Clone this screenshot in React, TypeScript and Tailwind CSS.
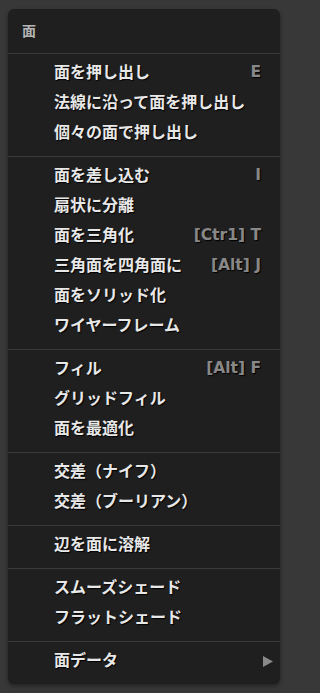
const sections: { label: string; hint?: string; sub?: boolean }[][] = [
  [
    { label: '面を押し出し', hint: 'E' },
    { label: '法線に沿って面を押し出し' },
    { label: '個々の面で押し出し' },
  ],
  [
    { label: '面を差し込む', hint: 'I' },
    { label: '扇状に分離' },
    { label: '面を三角化', hint: '[Ctr1] T' },
    { label: '三角面を四角面に', hint: '[Alt] J' },
    { label: '面をソリッド化' },
    { label: 'ワイヤーフレーム' },
  ],
  [
    { label: 'フィル', hint: '[Alt] F' },
    { label: 'グリッドフィル' },
    { label: '面を最適化' },
  ],
  [{ label: '交差（ナイフ）' }, { label: '交差（ブーリアン）' }],
  [{ label: '辺を面に溶解' }],
  [{ label: 'スムーズシェード' }, { label: 'フラットシェード' }],
  [{ label: '面データ', sub: true }],
];

function MenuRow({ label, hint, sub }: { label: string; hint?: string; sub?: boolean }) {
  return (
    <div className="flex h-[30px] items-center justify-between pl-[46px] pr-[19px]">
      <span className="text-[16px] font-bold text-[#e8e8e8] [text-shadow:1px_1px_1px_#000]">{label}</span>
      {hint && (
        <span className="text-[15.5px] font-bold text-[#888888] [text-shadow:1px_1px_1px_#000]">{hint}</span>
      )}
      {sub && (
        <svg width="10" height="11" viewBox="0 0 10 11" className="mr-[-12px]">
          <path d="M0 0 L10 5.5 L0 11 Z" fill="#8a8a8a" />
        </svg>
      )}
    </div>
  );
}

export default function App() {
  return (
    <div
      className="min-h-[693px] w-full bg-[#383838]"
      style={{ fontFamily: '"DejaVu Sans", "Noto Sans CJK JP", sans-serif' }}
    >
      <div className="w-[288px] px-2 pt-[9px] pb-[9px]">
        <div className="overflow-hidden rounded-[6px] bg-[#1f1f1f] shadow-[0_2px_4px_rgba(0,0,0,0.4)]">
          <div className="flex h-[44px] items-center px-[14px]">
            <span className="text-[14px] font-bold text-[#b4b4b4]">面</span>
          </div>
          <div className="bg-[radial-gradient(circle,#292929_0.6px,transparent_0.7px)] bg-[length:6px_6px]">
            {sections.map((rows, i) => (
              <div key={i} className="border-t border-[#3a3a3a] pt-1 pb-2">
                {rows.map((r) => (
                  <MenuRow key={r.label} {...r} />
                ))}
              </div>
            ))}
          </div>
        </div>
      </div>
    </div>
  );
}
